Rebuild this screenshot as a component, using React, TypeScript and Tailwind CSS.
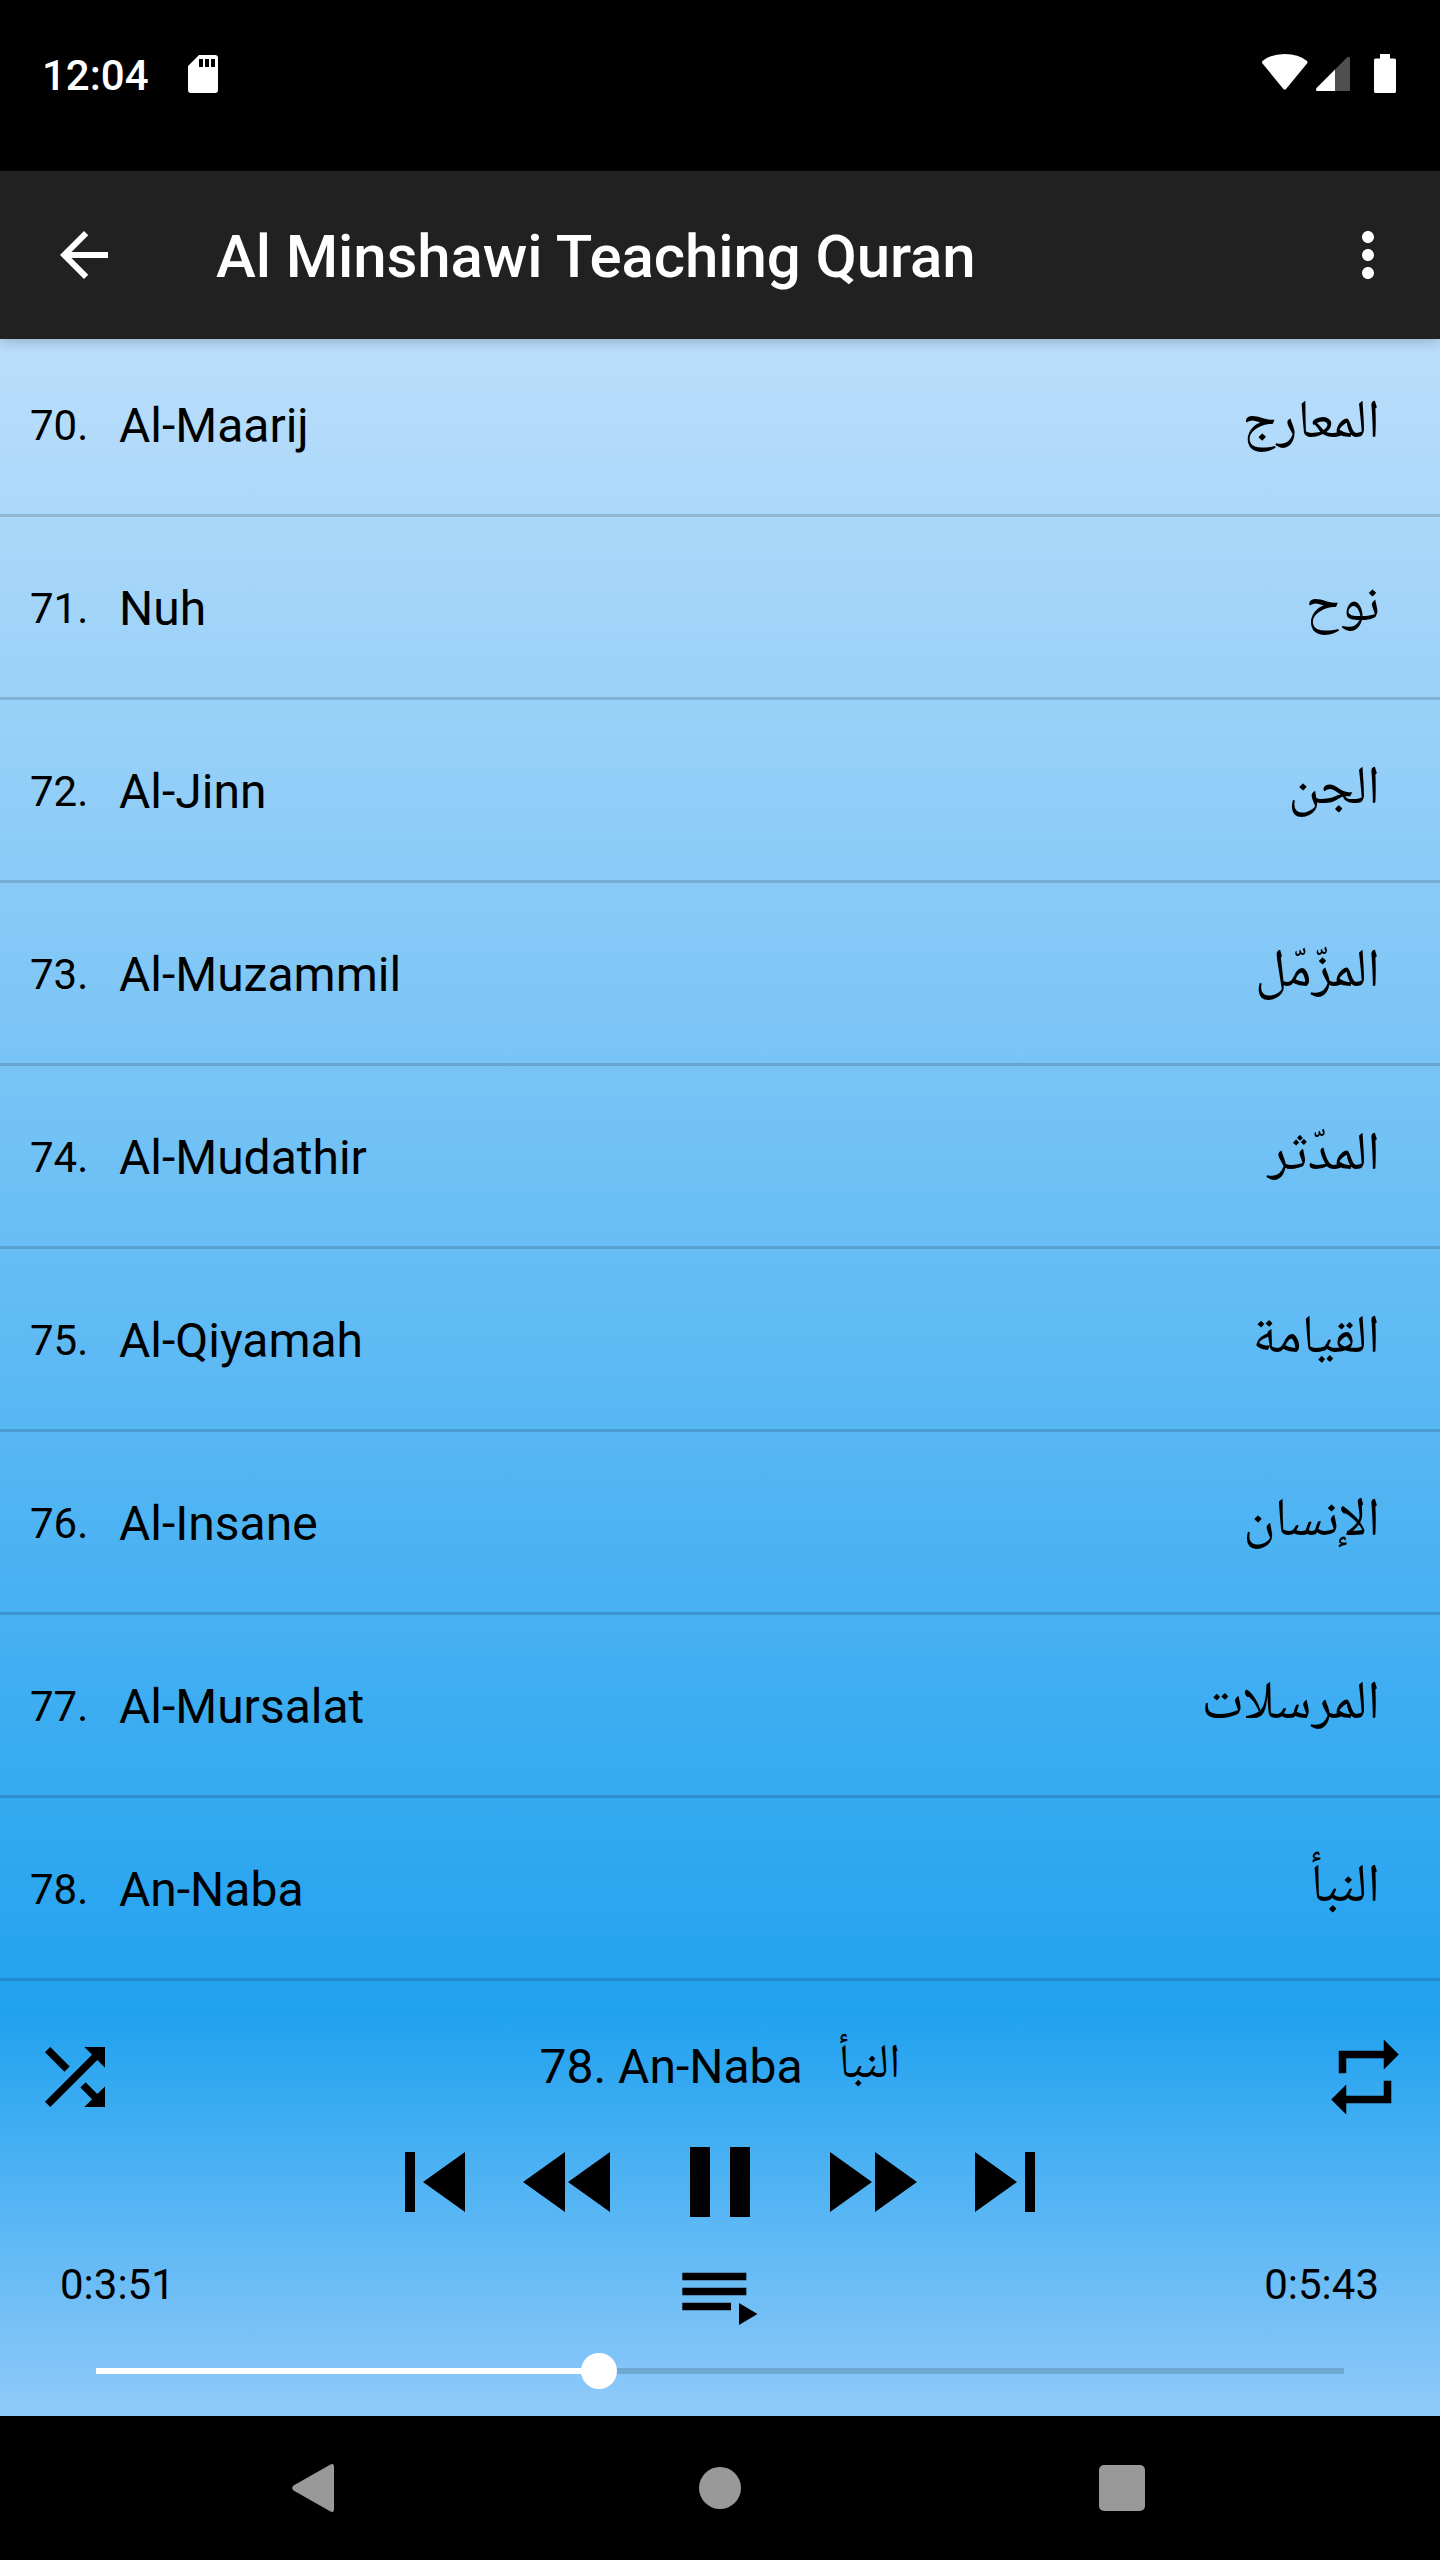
import type { ReactNode } from "react";

const surahs = [
  { id: 70, name: "Al-Maarij", arabic: "المعارج" },
  { id: 71, name: "Nuh", arabic: "نوح" },
  { id: 72, name: "Al-Jinn", arabic: "الجن" },
  { id: 73, name: "Al-Muzammil", arabic: "المزّمّل" },
  { id: 74, name: "Al-Mudathir", arabic: "المدّثر" },
  { id: 75, name: "Al-Qiyamah", arabic: "القيامة" },
  { id: 76, name: "Al-Insane", arabic: "الإنسان" },
  { id: 77, name: "Al-Mursalat", arabic: "المرسلات" },
  { id: 78, name: "An-Naba", arabic: "النبأ" },
];

const progress = 0.4029;

const Icon = ({ className, children }: { className: string; children: ReactNode }) => (
  <svg viewBox="0 0 24 24" fill="currentColor" className={`block shrink-0 ${className}`}>
    {children}
  </svg>
);

const StatusBar = () => (
  <div className="flex h-[171px] items-start justify-between bg-black pt-[48px] pr-[44px] pl-[42px] text-white">
    <div className="flex items-start">
      <span className="w-[107px] pt-px text-[42px] leading-[54px] font-medium">12:04</span>
      <svg viewBox="0 0 30 38" className="mt-[7px] ml-[39px] h-[38px] w-[30px]">
        <path
          fill="currentColor"
          fillRule="evenodd"
          d="M11 0H27a3 3 0 0 1 3 3V35a3 3 0 0 1-3 3H3a3 3 0 0 1-3-3V11ZM11 4v8h4V4Zm6 0v8h4V4Zm6 0v8h4V4Z"
        />
      </svg>
    </div>
    <svg viewBox="0 0 134 39" className="mt-[6px] h-[39px] w-[134px]">
      <path
        fill="currentColor"
        d="M0.5 7Q9 0 22.700 0T45 7Q46 8 45 9.500L24 35q-1.300 1.500-2.600 0L0.500 9.500Q-.5 8 .5 7Z"
      />
      <path fill="#4f4f4f" d="M73 15.500 85 3.500Q88 1.500 88 5V37H73Z" />
      <path fill="currentColor" d="M73 15.500V37H55.500Q53 37 54.500 34Z" />
      <path
        fill="currentColor"
        d="M118 0h10v4.500h4.500Q134 4.500 134 6V37.500Q134 39 132.500 39h-19Q112 39 112 37.500V6q0-1.500 1.500-1.500H118Z"
      />
    </svg>
  </div>
);

const AppBar = () => (
  <header className="relative z-10 flex h-[168px] items-center bg-[#212121] pr-[36px] pl-[48px] text-white shadow-[0_3px_12px_rgba(0,0,0,0.2)]">
    <Icon className="h-[72px] w-[72px]">
      <path d="M20 11H7.830l5.590-5.590L12 4l-8 8 8 8 1.410-1.410L7.830 13H20v-2z" />
    </Icon>
    <h1 className="ml-[96px] flex-1 pt-[4px] text-[60px] leading-[72px] font-medium tracking-[-0.1px] whitespace-nowrap">
      Al Minshawi Teaching Quran
    </h1>
    <Icon className="h-[72px] w-[72px]">
      <path d="M12 8c1.100 0 2-.9 2-2s-.9-2-2-2-2 .9-2 2 .9 2 2 2zm0 2c-1.100 0-2 .9-2 2s.9 2 2 2 2-.9 2-2-.9-2-2-2zm0 6c-1.100 0-2 .9-2 2s.9 2 2 2 2-.9 2-2-.9-2-2-2z" />
    </Icon>
  </header>
);

const SurahList = () => (
  // scrolled slightly, so the first row starts under the app bar
  <div className="flex h-[1677px] flex-col overflow-hidden bg-[linear-gradient(to_bottom,#bbdefb,#21a2ef)]">
    <ul className="-mt-[5px]">
      {surahs.map((s) => (
        <li
          key={s.id}
          className="flex h-[183px] items-center border-b-3 border-black/15 pt-[3px] pr-[60px] pl-[30px]"
        >
          <span className="w-[89px] text-[42px]">{s.id}.</span>
          <span className="flex-1 text-[48px]">{s.name}</span>
          <span dir="rtl" className="font-['Noto_Naskh_Arabic','DejaVu_Sans',sans-serif] text-[54px]">
            {s.arabic}
          </span>
        </li>
      ))}
    </ul>
  </div>
);

const Player = () => (
  <section className="flex h-[400px] flex-col bg-[linear-gradient(to_bottom,#21a2ef,#90caf9)]">
    <div className="flex h-[114px] justify-between px-[30px]">
      <Icon className="mt-[16px] h-[90px] w-[90px]">
        <path d="M10.590 9.170L5.410 4 4 5.410l5.170 5.170 1.420-1.410zM14.500 4l2.040 2.040L4 18.590 5.410 20 17.960 7.460 20 9.500V4h-5.500zm.33 9.410l-1.410 1.410 3.130 3.130L14.500 20H20v-5.500l-2.040 2.040-3.130-3.130z" />
      </Icon>
      <div className="mt-[21px] flex h-[60px] items-center gap-[36px] text-[48px]">
        <span>78. An-Naba</span>
        <span dir="rtl" className="font-['Noto_Naskh_Arabic','DejaVu_Sans',sans-serif]">
          النبأ
        </span>
      </div>
      <Icon className="mt-[16px] h-[90px] w-[90px]">
        <path d="M7 7h10v3l4-4-4-4v3H5v6h2V7zm10 10H7v-3l-4 4 4 4v-3h12v-6h-2v4z" />
      </Icon>
    </div>

    <div className="flex h-[104px] items-center justify-center">
      <svg viewBox="0 0 632 72" className="h-[72px] w-[632px]">
        <path d="M1 6H11V66H1ZM61 6V66L19 36ZM161 6V66L119 36ZM206 6V66L164 36ZM286 1H306V71H286ZM326 1H346V71H326ZM426 6V66L468 36ZM471 6V66L513 36ZM571 6V66L613 36ZM621 6H631V66H621Z" />
      </svg>
    </div>

    <div className="flex h-[112px] justify-between px-[60px]">
      <span className="mt-[24px] w-[140px] text-[42px] leading-[54px]">0:3:51</span>
      <svg viewBox="0 0 76 54" className="mt-[38px] h-[54px] w-[76px]">
        <path d="M.3 .7H64.300V8.200H.3ZM.3 15.700H64.300V23.200H.3ZM.3 30.700H49V38.200H.3ZM57 31V53L75.500 42Z" />
      </svg>
      <span className="mt-[24px] w-[140px] pr-px text-right text-[42px] leading-[54px]">0:5:43</span>
    </div>

    <div className="relative mx-[96px] mt-[7px] flex h-[36px] items-center">
      <div className="h-[6px] w-full bg-[#6ea9d2]">
        <div className="h-full bg-white" style={{ width: `${progress * 100}%` }} />
      </div>
      <div
        className="absolute h-[36px] w-[36px] -translate-x-1/2 rounded-full bg-white"
        style={{ left: `${progress * 100}%` }}
      />
    </div>
  </section>
);

const NavBar = () => (
  <nav className="flex h-[144px] items-center justify-between bg-black pr-[295px] pl-[292px] text-[#999]">
    <svg viewBox="0 0 42 48" className="h-[48px] w-[42px]">
      <path fill="currentColor" d="M38.500 .5Q42 -1 42 3V45Q42 49 38.500 47.500L1.500 26.500Q-1 24 1.500 21.500Z" />
    </svg>
    <div className="ml-[7px] h-[42px] w-[42px] rounded-full bg-current" />
    <div className="h-[46px] w-[46px] rounded-[5px] bg-current" />
  </nav>
);

export default function App() {
  return (
    <div className="flex h-[2560px] w-[1440px] flex-col overflow-hidden font-[Roboto,sans-serif] text-black">
      <StatusBar />
      <AppBar />
      <SurahList />
      <Player />
      <NavBar />
    </div>
  );
}
